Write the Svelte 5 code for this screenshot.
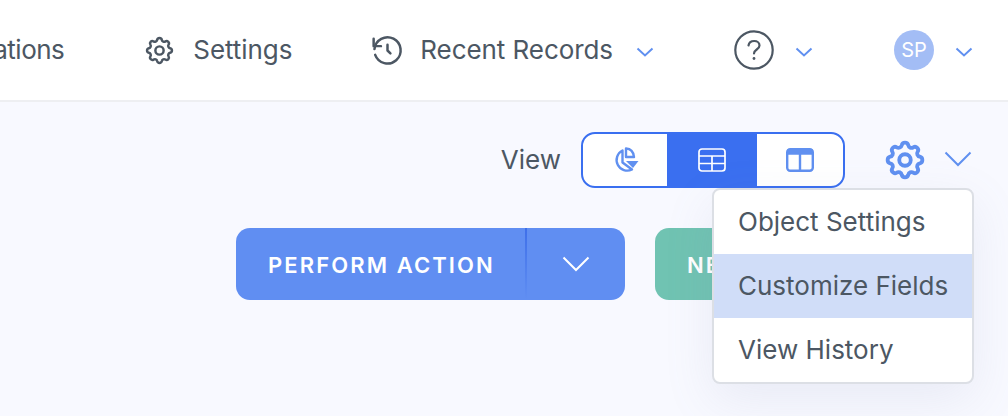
<script>
  const items = ['Object Settings', 'Customize Fields', 'View History'];
</script>

<div class="page">
  <header class="top">
    <div class="nav-item"><span class="label first">ations</span></div>
    <div class="nav-item settings">
      <svg class="ic small-gear" viewBox="0 0 24 24" fill="none" stroke="currentColor" stroke-width="1.800" stroke-linecap="round" stroke-linejoin="round"><path d="M10.300 4.300c.4-1.800 3-1.800 3.400 0a1.700 1.700 0 0 0 2.600 1.100c1.500-.9 3.300.8 2.300 2.300a1.700 1.700 0 0 0 1.100 2.600c1.800.4 1.800 3 0 3.400a1.700 1.700 0 0 0-1.100 2.600c.9 1.500-.8 3.300-2.300 2.300a1.700 1.700 0 0 0-2.600 1.100c-.4 1.800-3 1.800-3.400 0a1.700 1.700 0 0 0-2.600-1.100c-1.500.9-3.300-.8-2.300-2.300a1.700 1.700 0 0 0-1.100-2.600c-1.800-.4-1.800-3 0-3.400a1.700 1.700 0 0 0 1.100-2.600c-.9-1.500.8-3.300 2.300-2.300 1 .6 2.300.1 2.600-1.100z"/><circle cx="12" cy="12" r="3"/></svg>
      <span class="label">Settings</span>
    </div>
    <div class="nav-item recent">
      <svg class="ic history" viewBox="0 0 24 24" fill="none" stroke="currentColor" stroke-width="1.700" stroke-linecap="round" stroke-linejoin="round"><path d="M12 8v4l2 2"/><path d="M3.050 11a9 9 0 1 1 .5 4"/><path d="M2.500 4v5h5"/></svg>
      <span class="label">Recent Records</span>
      <svg class="chev small rec" viewBox="0 0 18 10" fill="none"><path d="M1.500 1.500 9 8.500l7.500-7"/></svg>
    </div>
    <div class="nav-item help">
      <svg class="help-ic" viewBox="0 0 40 40" fill="none" stroke="currentColor" stroke-width="2.200"><circle cx="20" cy="20" r="18.700"/><path d="M14.500 15.500c.5-3 2.800-4.500 5.700-4.500 3 0 5.300 1.800 5.300 4.500 0 4-5.500 4-5.500 8" stroke-linecap="round"/><circle cx="20" cy="28.500" r="1.400" fill="currentColor" stroke="none"/></svg>
      <svg class="chev small" viewBox="0 0 18 10" fill="none"><path d="M1.500 1.500 9 8.500l7.500-7"/></svg>
    </div>
    <div class="nav-item user">
      <span class="avatar">SP</span>
      <svg class="chev small" viewBox="0 0 18 10" fill="none"><path d="M1.500 1.500 9 8.500l7.500-7"/></svg>
    </div>
  </header>

  <main class="content">
    <div class="view-row">
      <span class="view-label">View</span>
      <div class="toggle">
        <div class="seg seg-a">
          <svg width="28" height="28" viewBox="0 0 28 28" fill="none" stroke="#6090f0" stroke-width="2.400" stroke-linejoin="round"><path d="M11.500 4.500a10.500 10.500 0 1 0 9.500 19l-9.500-7z"/><path d="M15 2.500c4.500.3 7.500 3.500 8 8.500h-8z"/><path d="M15 15h12.500l-5.500 7z" fill="#6090f0" stroke="none"/></svg>
        </div>
        <div class="seg seg-b">
          <svg width="28" height="28" viewBox="0 0 28 28" fill="none" stroke="#fff" stroke-width="1.700"><rect x="1" y="3" width="26" height="22" rx="3"/><path d="M1 10h26M1 17.500h26M14 10v15"/></svg>
        </div>
        <div class="seg seg-c">
          <svg width="28" height="28" viewBox="0 0 28 28" fill="none" stroke="#6090f0" stroke-width="2.400"><rect x="1.200" y="3.200" width="25.600" height="21.600" rx="3"/><path d="M1.200 6h25.600" stroke-width="5.500"/><path d="M14 8v17"/></svg>
        </div>
      </div>
      <svg class="gear" viewBox="0 0 24 24" fill="none" stroke="#6090f0" stroke-width="2" stroke-linecap="round" stroke-linejoin="round"><path d="M10.300 4.300c.4-1.800 3-1.800 3.400 0a1.700 1.700 0 0 0 2.600 1.100c1.500-.9 3.300.8 2.300 2.300a1.700 1.700 0 0 0 1.100 2.600c1.800.4 1.800 3 0 3.400a1.700 1.700 0 0 0-1.100 2.600c.9 1.500-.8 3.300-2.300 2.300a1.700 1.700 0 0 0-2.600 1.100c-.4 1.800-3 1.800-3.400 0a1.700 1.700 0 0 0-2.600-1.100c-1.500.9-3.300-.8-2.300-2.300a1.700 1.700 0 0 0-1.100-2.600c-1.800-.4-1.800-3 0-3.400a1.700 1.700 0 0 0 1.100-2.600c-.9-1.500.8-3.300 2.300-2.300 1 .6 2.300.1 2.600-1.100z"/><circle cx="12" cy="12" r="3"/></svg>
      <svg class="chev big" viewBox="0 0 28 16" fill="none"><path d="M1.500 1.500 14 14 26.500 1.500"/></svg>
    </div>

    <div class="actions">
      <div class="split">
        <span class="split-main">PERFORM ACTION</span>
        <span class="divider"></span>
        <span class="split-caret">
          <svg viewBox="0 0 28 16" fill="none"><path d="M1.500 1.500 14 14 26.500 1.500"/></svg>
        </span>
      </div>
      <div class="new-btn">NEW</div>
    </div>

    <ul class="menu">
      {#each items as item, i}
        <li class:active={i === 1}>{item}</li>
      {/each}
    </ul>
  </main>
</div>

<style>
  :global(body) {
    margin: 0;
    overflow: hidden;
  }
  .page {
    width: 1008px;
    height: 416px;
    overflow: hidden;
    font-family: Inter, Lato, sans-serif;
    color: #4c5763;
    background: #f8f9ff;
  }
  .top {
    height: 100px;
    background: #fff;
    border-bottom: 2px solid #eeeff2;
    display: flex;
    align-items: center;
    justify-content: flex-end;
    padding-right: 35px;
    white-space: nowrap;
  }
  .nav-item {
    display: flex;
    align-items: center;
    flex: none;
  }
  .label {
    font-size: 26px;
    line-height: 40px;
    letter-spacing: -0.07px;
  }
  .label.first { letter-spacing: -0.5px; }
  .settings { margin-left: 77px; gap: 16px; }
  .recent { margin-left: 78px; gap: 15px; }
  .help { margin-left: 80px; gap: 21px; }
  .user { margin-left: 81px; gap: 21px; }
  .ic { width: 36px; height: 36px; }
  .ic.history { width: 35px; height: 35px; }
  .ic.small-gear { width: 33px; height: 33px; margin: 0 1.500px; }
  .help-ic { width: 40px; height: 40px; }
  .chev { stroke: #6090f0; stroke-width: 2; flex: none; }
  .chev.small { width: 18px; height: 10px; margin-top: 3px; }
  .chev.rec { margin-left: 8px; }
  .chev.big { width: 28px; height: 16px; margin: 0 0 3px 16px; }
  .avatar {
    width: 40px;
    height: 40px;
    border-radius: 50%;
    background: #a3bdf5;
    color: #fff;
    font-size: 20px;
    display: flex;
    align-items: center;
    justify-content: center;
  }
  .content {
    position: relative;
    height: 314px;
    padding: 30px 36px 0 0;
    box-sizing: border-box;
  }
  .view-row {
    display: flex;
    align-items: center;
    justify-content: flex-end;
    height: 56px;
  }
  .view-label { font-size: 26px; margin: 0 20px 2px 0; }
  .toggle {
    display: flex;
    width: 264px;
    height: 56px;
    box-sizing: border-box;
    border: 2px solid #3a6ff0;
    border-radius: 14px;
    overflow: hidden;
    background: #fff;
  }
  .seg { display: flex; align-items: center; justify-content: center; height: 52px; }
  .seg-a { width: 84px; }
  .seg-b { width: 90px; background: #3a6ff0; }
  .seg-c { width: 86px; }
  .gear { width: 46px; height: 46px; margin-left: 37px; }
  .actions {
    display: flex;
    gap: 30px;
    margin: 40px 0 0 236px;
    height: 72px;
  }
  .split {
    display: flex;
    width: 389px;
    height: 72px;
    border-radius: 14px;
    background: #608ef2;
    color: #fff;
    overflow: hidden;
    flex: none;
  }
  .split-main {
    width: 289px;
    padding-left: 32px;
    box-sizing: border-box;
    font-size: 22px;
    font-weight: 600;
    letter-spacing: 2.100px;
    line-height: 74px;
    white-space: nowrap;
  }
  .divider {
    width: 2px;
    background: linear-gradient(#3e6fe9, #608ef2);
  }
  .split-caret { flex: 1; display: flex; align-items: center; justify-content: center; }
  .split-caret svg { width: 30px; height: 16px; stroke: #fff; stroke-width: 2; }
  .new-btn {
    width: 200px;
    height: 72px;
    border-radius: 14px;
    background: #70c3b2;
    color: #fff;
    font-size: 22px;
    font-weight: 600;
    letter-spacing: 2.100px;
    line-height: 74px;
    padding-left: 32px;
    box-sizing: border-box;
    flex: none;
  }
  .menu {
    position: absolute;
    left: 712px;
    top: 86px;
    width: 262px;
    box-sizing: border-box;
    margin: 0;
    padding: 0;
    list-style: none;
    background: #fff;
    border: 2px solid #dcdfe5;
    border-radius: 8px;
    box-shadow: 0 16px 50px rgba(120, 130, 170, 0.12);
  }
  .menu li {
    height: 64px;
    line-height: 64px;
    padding-left: 24px;
    font-size: 26px;
  }
  .menu li.active { background: #d0ddf8; }
</style>
